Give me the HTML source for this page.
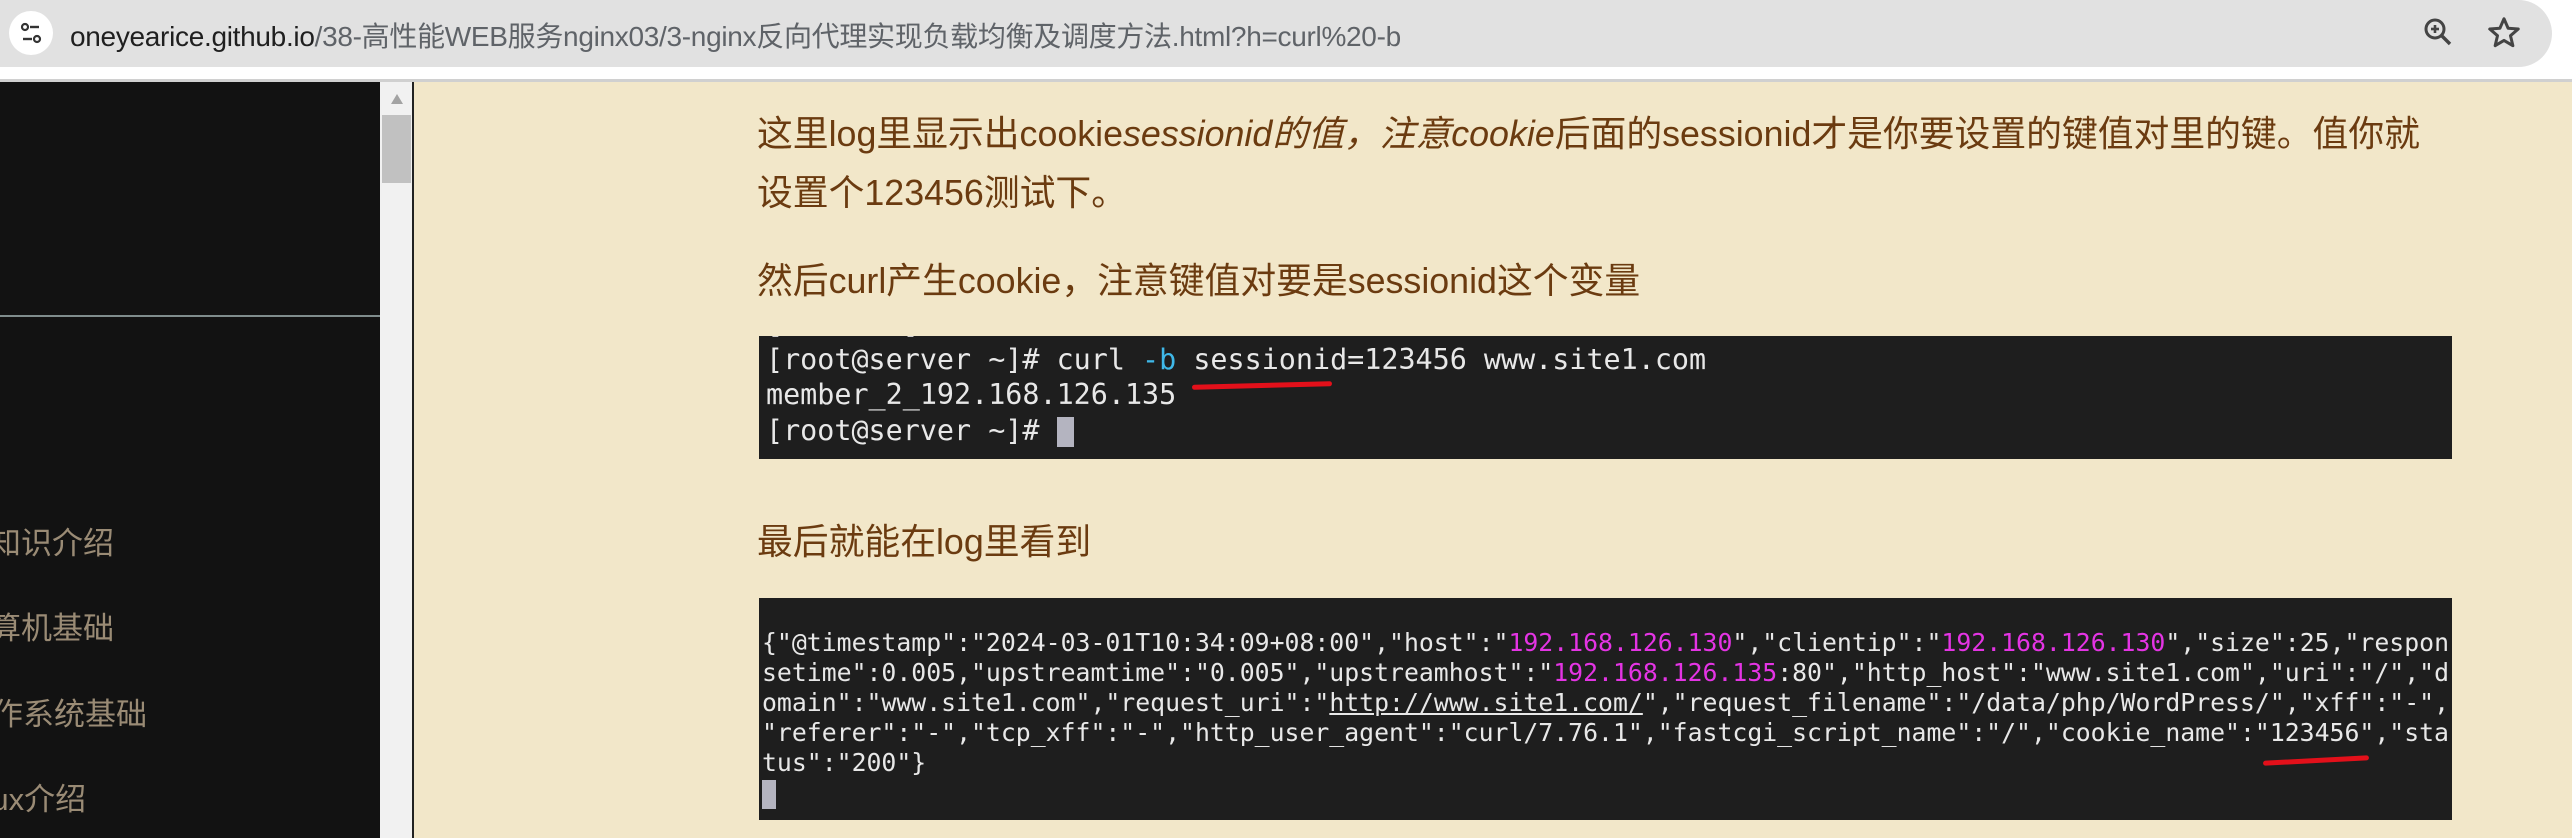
<!DOCTYPE html>
<html><head><meta charset="utf-8"><style>
*{margin:0;padding:0;box-sizing:border-box}
body{width:2572px;height:838px;overflow:hidden;background:#fff;position:relative;font-family:"Liberation Sans","Noto Sans CJK SC",sans-serif}
.pill{position:absolute;left:-10px;top:0;width:2562px;height:67px;background:#e1e1e1;border-radius:0 34px 34px 0}
.ic{position:absolute;left:9px;top:11px;width:44px;height:44px;border-radius:50%;background:#fff}
.url{position:absolute;left:70px;top:15px;font-size:28px;color:#5f6368;white-space:nowrap;letter-spacing:-0.3px}
.url b{font-weight:normal;color:#1f1f1f}
.line{position:absolute;left:0;top:79px;width:2572px;height:3px;background:#d0d0d0}
.side{position:absolute;left:0;top:82px;width:380px;height:756px;background:#121212;overflow:hidden}
.sep{position:absolute;left:0;top:233px;width:380px;height:2px;background:#7f8c8c}
.si{position:absolute;font-size:31px;color:#9a8b75;white-space:nowrap}
.sb{position:absolute;left:380px;top:82px;width:32px;height:756px;background:#f1f1f1}
.thumb{position:absolute;left:382px;top:115px;width:29px;height:68px;background:#c1c1c1}
.bd{position:absolute;left:412px;top:82px;width:2px;height:756px;background:#222}
.main{position:absolute;left:414px;top:82px;width:2158px;height:756px;background:#f2e7c9}
.p{position:absolute;left:757px;font-size:35.8px;color:#6b3b10;white-space:nowrap}
.p i{font-style:italic}
.t{position:absolute;left:759px;width:1693px;background:#1e1e1e;overflow:hidden;font-family:"DejaVu Sans Mono","Liberation Mono",monospace;color:#e8e8e8;white-space:pre}
.t1{top:336px;height:123px;font-size:28.4px;line-height:35.5px;padding-left:7px}
.t2{top:598px;height:222px;font-size:24.8px;line-height:30px;padding-left:3px;padding-top:30px}
.m{color:#e434e4}.c{color:#3fb8e8}
.cur{display:inline-block;background:#b4b4c0;vertical-align:middle}
.red{position:absolute;background:#e3101a;height:5px;border-radius:3px}
</style></head><body>
<div class="pill"></div>
<div class="ic"><svg width="44" height="44" viewBox="0 0 44 44"><circle cx="16" cy="16" r="3" fill="none" stroke="#333" stroke-width="2.2"/><line x1="21" y1="16" x2="30" y2="16" stroke="#333" stroke-width="2.4"/><circle cx="28" cy="28" r="3" fill="none" stroke="#333" stroke-width="2.2"/><line x1="14" y1="28" x2="23" y2="28" stroke="#333" stroke-width="2.4"/></svg></div>
<div class="url"><b>oneyearice.github.io</b>/38-高性能WEB服务nginx03/3-nginx反向代理实现负载均衡及调度方法.html?h=curl%20-b</div>
<svg style="position:absolute;left:2420px;top:14px" width="38" height="38" viewBox="0 0 38 38"><circle cx="15" cy="15" r="9" fill="none" stroke="#444" stroke-width="3"/><line x1="22" y1="22" x2="30" y2="30" stroke="#444" stroke-width="3.4"/><line x1="11" y1="15" x2="19" y2="15" stroke="#444" stroke-width="2.6"/><line x1="15" y1="11" x2="15" y2="19" stroke="#444" stroke-width="2.6"/></svg>
<svg style="position:absolute;left:2485px;top:14px" width="38" height="38" viewBox="0 0 24 24"><path d="M12 3l2.6 6 6.4.5-4.9 4.2 1.5 6.3L12 16.7 6.4 20l1.5-6.3L3 9.5 9.4 9z" fill="none" stroke="#444" stroke-width="1.9" stroke-linejoin="round"/></svg>
<div class="line"></div>
<div class="side">
<div class="sep"></div>
<div class="si" style="left:-10px;top:436px">知识介绍</div>
<div class="si" style="left:-41px;top:521px">计算机基础</div>
<div class="si" style="left:-39px;top:607px">操作系统基础</div>
<div class="si" style="left:-50px;top:692px">Linux介绍</div>
</div>
<div class="sb"></div>
<svg style="position:absolute;left:389px;top:92px" width="16" height="14"><polygon points="8,2 14,12 2,12" fill="#a3a3a3"/></svg>
<div class="thumb"></div>
<div class="bd"></div>
<div class="main"></div>
<div class="p" style="top:105px">这里log里显示出cookie<i>sessionid的值，注意cookie</i>后面的sessionid才是你要设置的键值对里的键。值你就</div>
<div class="p" style="top:164px">设置个123456测试下。</div>
<div class="p" style="top:252px">然后curl产生cookie，注意键值对要是sessionid这个变量</div>
<div class="t t1"><div style="margin-top:-30px;color:#ccc">[      ~]</div>[root@server ~]# curl <span class="c">-b</span> sessionid=123456 www.site1.com
member_2_192.168.126.135
[root@server ~]# <span class="cur" style="width:17px;height:30px"></span></div>
<div class="red" style="left:1192px;top:383px;width:140px;transform:rotate(-1.5deg)"></div>
<div class="p" style="top:513px">最后就能在log里看到</div>
<div class="t t2">{"@timestamp":"2024-03-01T10:34:09+08:00","host":"<span class="m">192.168.126.130</span>","clientip":"<span class="m">192.168.126.130</span>","size":25,"respon
setime":0.005,"upstreamtime":"0.005","upstreamhost":"<span class="m">192.168.126.135</span>:80","http_host":"www.site1.com","uri":"/","d
omain":"www.site1.com","request_uri":"<u>http://www.site1.com/</u>","request_filename":"/data/php/WordPress/","xff":"-",
"referer":"-","tcp_xff":"-","http_user_agent":"curl/7.76.1","fastcgi_script_name":"/","cookie_name":"123456","sta
tus":"200"}
<span class="cur" style="width:14px;height:29px"></span></div>
<div class="red" style="left:2263px;top:758px;width:106px;transform:rotate(-3deg)"></div>
</body></html>
